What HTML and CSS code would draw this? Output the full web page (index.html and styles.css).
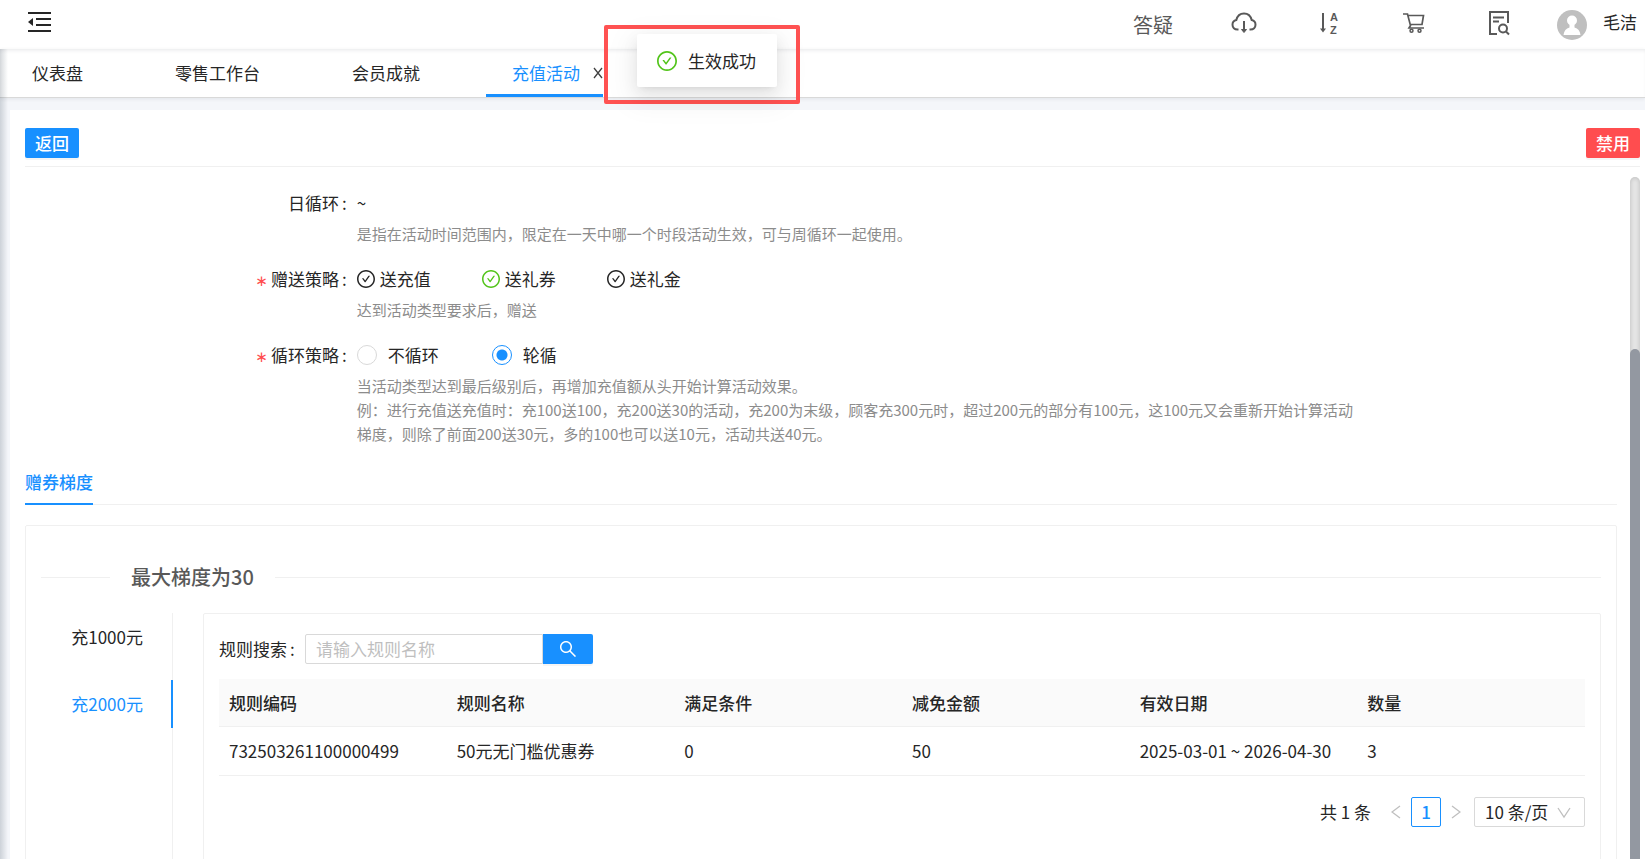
FILE: index.html
```html
<!DOCTYPE html>
<html lang="zh-CN">
<head>
  <meta charset="UTF-8" />
  <title>充值活动</title>
  <link rel="stylesheet" href="styles.css">
</head>
<body>

  <svg class="sprite" aria-hidden="true">
    <symbol id="check-circle" viewBox="64 64 896 896">
      <path d="M699 353h-46.9c-10.2 0-19.9 4.9-25.9 13.3L469 584.3l-71.2-98.8c-6-8.3-15.6-13.3-25.9-13.3H325c-6.5 0-10.3 7.4-6.5 12.7l124.6 172.8a31.8 31.8 0 0051.7 0l210.6-292c3.9-5.3.1-12.7-6.4-12.7z"/>
      <path d="M512 64C264.6 64 64 264.6 64 512s200.6 448 448 448 448-200.6 448-448S759.4 64 512 64zm0 820c-205.4 0-372-166.6-372-372s166.6-372 372-372 372 166.6 372 372-166.6 372-372 372z"/>
    </symbol>
  </svg>

  <header class="header">
    <button class="icon-btn" aria-label="收起菜单">
      <svg width="24" height="22" viewBox="0 0 24 22">
        <path d="M0 2h23M8 8h15M8 14h15M0 20h23" fill="none" stroke="#262626" stroke-width="2"/>
        <path d="M0 11l5-4v8z" fill="#262626"/>
      </svg>
    </button>
    <nav class="header-tools">
      <a href="#" class="faq">答疑</a>
      <button class="tool" aria-label="下载">
        <svg width="26" height="22" viewBox="0 0 26 22" fill="none" stroke="#595959" stroke-width="2">
          <path d="M7.5 17.500H6.500C3.500 17.500 1.500 15.500 1.500 12.800c0-2.400 1.600-4.200 3.800-4.700C6.300 4 9.300 1.500 13 1.500s6.700 2.500 7.700 6.600c2.200.5 3.800 2.300 3.800 4.700 0 2.700-2 4.700-5 4.700h-1"/>
          <path d="M13 9v10"/>
          <path d="M10.500 17.500h5L13 20.500z" fill="#595959" stroke-width="1"/>
        </svg>
      </button>
      <button class="tool" aria-label="排序">
        <svg class="sort-icon" width="22" height="28" viewBox="0 0 22 28">
          <path d="M5 4v17" fill="none" stroke="#595959" stroke-width="2"/>
          <path d="M2 19.500h6L5 23.500z"/>
          <text x="12" y="12">A</text>
          <text x="12" y="25">Z</text>
        </svg>
      </button>
      <button class="tool" aria-label="购物车">
        <svg width="22" height="22" viewBox="0 0 22 22" fill="none" stroke="#595959" stroke-width="2">
          <path d="M0 2h4.500l3 11.500L6 16h15M5 3.500h15.500L19 12.500H7.500" stroke-width="1.700"/>
          <circle cx="8.500" cy="18.700" r="1.500" stroke-width="1.500"/>
          <circle cx="16.500" cy="18.700" r="1.500" stroke-width="1.500"/>
        </svg>
      </button>
      <button class="tool" aria-label="日志查询">
        <svg width="22" height="26" viewBox="0 0 22 26" fill="none" stroke="#595959" stroke-width="2">
          <path d="M9 24H2V2h18v11M5 7.500h11M5 11.500h6"/>
          <circle cx="15" cy="18.500" r="4"/>
          <path d="M18 21.500l3 3"/>
        </svg>
      </button>
    </nav>
    <a href="#" class="user">
      <svg width="30" height="30" viewBox="0 0 30 30">
        <circle cx="15" cy="15" r="15" fill="#bfbfbf"/>
        <circle cx="15" cy="10.500" r="5" fill="#fff"/>
        <path d="M12.500 14h5v3.500c3.500.8 5.500 3.500 6 7.500h-17c.5-4 2.500-6.700 6-7.500z" fill="#fff"/>
      </svg>
      <span>毛洁</span>
    </a>
  </header>

  <nav class="page-tabs">
    <a href="#">仪表盘</a>
    <a href="#">零售工作台</a>
    <a href="#">会员成就</a>
    <a href="#" class="active">充值活动
      <svg width="10" height="12" viewBox="0 0 10 12"><path d="M1 1l8 10M9 1L1 11" fill="none" stroke="#404040" stroke-width="1.300"/></svg>
    </a>
  </nav>

  <main class="page">
    <div class="toolbar">
      <button class="btn btn-primary">返回</button>
      <button class="btn btn-danger">禁用</button>
    </div>

    <div class="scroll-area">
      <div class="content">

        <div class="form-row">
          <div class="form-label">日循环</div>
          <div class="form-value">
            <div class="form-line">~</div>
            <p class="help">是指在活动时间范围内，限定在一天中哪一个时段活动生效，可与周循环一起使用。</p>
          </div>
        </div>

        <div class="form-row">
          <div class="form-label required">赠送策略</div>
          <div class="form-value">
            <div class="form-line">
              <span class="gift"><svg><use href="#check-circle"/></svg>送充值</span>
              <span class="gift on"><svg><use href="#check-circle"/></svg>送礼券</span>
              <span class="gift"><svg><use href="#check-circle"/></svg>送礼金</span>
            </div>
            <p class="help">达到活动类型要求后，赠送</p>
          </div>
        </div>

        <div class="form-row">
          <div class="form-label required">循环策略</div>
          <div class="form-value">
            <div class="form-line">
              <label class="radio"><input type="radio" name="loop">不循环</label>
              <label class="radio"><input type="radio" name="loop" checked>轮循</label>
            </div>
            <p class="help">当活动类型达到最后级别后，再增加充值额从头开始计算活动效果。<br>例：进行充值送充值时：充100送100，充200送30的活动，充200为末级，顾客充300元时，超过200元的部分有100元，这100元又会重新开始计算活动梯度，则除了前面200送30元，多的100也可以送10元，活动共送40元。</p>
          </div>
        </div>

        <div class="section-tabs">
          <a href="#" class="active">赠券梯度</a>
        </div>

        <section class="card">
          <h2 class="divider">最大梯度为30</h2>
          <div class="levels">
            <div class="level-tabs">
              <a href="#">充1000元</a>
              <a href="#" class="active">充2000元</a>
            </div>

            <div class="panel">
              <form class="search">
                <label for="ruleName">规则搜索</label>
                <input type="text" id="ruleName" placeholder="请输入规则名称">
                <button type="button" aria-label="搜索">
                  <svg width="18" height="18" viewBox="64 64 896 896" fill="#fff"><path d="M909.6 854.5L649.9 594.8C690.2 542.7 712 479 712 412c0-80.2-31.3-155.4-87.9-212.1-56.6-56.7-132-87.9-212.1-87.9s-155.5 31.3-212.1 87.9C143.2 256.5 112 331.8 112 412c0 80.1 31.3 155.5 87.9 212.1C256.5 680.8 331.8 712 412 712c67 0 130.6-21.8 182.7-62l259.7 259.6a8.2 8.2 0 0011.6 0l43.6-43.5a8.2 8.2 0 000-11.6zM570.4 570.4C528 612.7 471.8 636 412 636s-116-23.3-158.4-65.6C211.3 528 188 471.8 188 412s23.3-116.1 65.6-158.4C296 211.3 352.2 188 412 188s116.1 23.2 158.4 65.6S636 352.2 636 412s-23.3 116.1-65.6 158.4z"/></svg>
                </button>
              </form>

              <table>
                <thead>
                  <tr>
                    <th>规则编码</th>
                    <th>规则名称</th>
                    <th>满足条件</th>
                    <th>减免金额</th>
                    <th>有效日期</th>
                    <th>数量</th>
                  </tr>
                </thead>
                <tbody>
                  <tr>
                    <td>732503261100000499</td>
                    <td>50元无门槛优惠券</td>
                    <td>0</td>
                    <td>50</td>
                    <td>2025-03-01 ~ 2026-04-30</td>
                    <td>3</td>
                  </tr>
                </tbody>
              </table>

              <div class="pagination">
                <span>共 1 条</span>
                <button class="arrow" aria-label="上一页" disabled>
                  <svg width="10" height="14" viewBox="0 0 10 14"><path d="M9 1L1 7l8 6" fill="none" stroke="#bfbfbf" stroke-width="1.300"/></svg>
                </button>
                <button class="current">1</button>
                <button class="arrow" aria-label="下一页" disabled>
                  <svg width="10" height="14" viewBox="0 0 10 14"><path d="M1 1l8 6-8 6" fill="none" stroke="#bfbfbf" stroke-width="1.300"/></svg>
                </button>
                <div class="page-size">
                  <select aria-label="每页条数">
                    <option>10 条/页</option>
                    <option>20 条/页</option>
                    <option>50 条/页</option>
                  </select>
                  <svg width="14" height="12" viewBox="0 0 14 12"><path d="M1 1l6 9 6-9" fill="none" stroke="#bfbfbf" stroke-width="1.300"/></svg>
                </div>
              </div>
            </div>
          </div>
        </section>
      </div>

      <div class="scroll-track"><div class="scroll-thumb"></div></div>
    </div>
  </main>

  <div class="notice-frame">
    <div class="notice" role="status">
      <svg><use href="#check-circle"/></svg>
      <span>生效成功</span>
    </div>
  </div>

</body>
</html>
```

FILE: styles.css
```css
* {
  box-sizing: border-box;
}

body {
  display: flex;
  flex-direction: column;
  height: 100vh;
  margin: 0;
  overflow: hidden;
  background: #f4f6fa;
  color: #262626;
  font-family: "Noto Sans CJK SC", sans-serif;
  font-size: 17px;
  line-height: 24px;
}

a {
  color: inherit;
  text-decoration: none;
}

button,
input,
select {
  font: inherit;
  color: inherit;
}

button {
  padding: 0;
  border: none;
  background: none;
  cursor: pointer;
}

svg {
  display: block;
  flex: none;
}

.sprite {
  display: none;
}

/* header */
.header {
  display: flex;
  align-items: center;
  flex: none;
  height: 49px;
  padding: 0 8px 0 28px;
  background: #fff;
}

.icon-btn {
  margin-bottom: 6px;
}

.header-tools {
  display: flex;
  align-items: center;
  margin: 0 16px 4px auto;
}

.faq {
  margin-right: 28px;
  padding-top: 4px;
  color: #595959;
  font-size: 20px;
}

.tool {
  display: flex;
  justify-content: center;
  width: 85px;
}

.sort-icon {
  fill: #595959;
  font-family: "Liberation Sans", sans-serif;
  font-size: 11px;
  font-weight: 700;
}

.user {
  display: flex;
  align-items: center;
  gap: 16px;
}

.user span {
  margin-bottom: 6px;
}

/* opened pages */
.page-tabs {
  position: relative;
  z-index: 1;
  display: flex;
  flex: none;
  gap: 66px;
  height: 49px;
  padding-left: 6px;
  border-bottom: 1px solid #d9d9d9;
  background: #fff;
  box-shadow: inset 0 3px 4px -2px rgba(0, 21, 41, 0.1), 0 1px 4px rgba(0, 21, 41, 0.08);
}

.page-tabs a {
  display: flex;
  align-items: center;
  gap: 13px;
  padding: 2px 0 0 26px;
  border-bottom: 3px solid transparent;
}

.page-tabs .active {
  border-color: #1890ff;
  color: #1890ff;
}

/* page */
.page {
  display: flex;
  flex-direction: column;
  flex: 1;
  min-height: 0;
  margin: 12px 0 0 10px;
  padding: 18px 5px 0 15px;
  background: #fff;
}

/* shade cast by the side menu */
.page::before {
  content: "";
  position: absolute;
  z-index: 2;
  top: 49px;
  bottom: 0;
  left: 0;
  width: 8px;
  background: linear-gradient(to right, rgba(0, 21, 41, 0.16), rgba(0, 21, 41, 0));
}

.toolbar {
  display: flex;
  justify-content: space-between;
  flex: none;
  padding-bottom: 8px;
  border-bottom: 1px solid #f0f0f0;
}

.btn {
  height: 30px;
  padding: 0 10px;
  border-radius: 2px;
  color: #fff;
  font-weight: 500;
  box-shadow: 0 2px 0 rgba(0, 0, 0, 0.04);
}

.btn-primary {
  background: #1890ff;
}

.btn-danger {
  background: #ff4d4f;
}

.scroll-area {
  display: flex;
  flex: 1;
  gap: 13px;
  min-height: 0;
  padding-top: 10px;
  overflow: hidden;
}

.content {
  flex: 1;
  padding-top: 11px;
}

.scroll-track {
  width: 10px;
  border-radius: 5px 5px 0 0;
  background: #e6e6e6;
  box-shadow: inset 0 0 5px rgba(0, 0, 0, 0.2);
}

.scroll-thumb {
  height: 75%;
  margin-top: 172px;
  border-radius: 5px 5px 0 0;
  background: #9398a1;
}

/* activity form */
.form-row {
  display: grid;
  grid-template-columns: 5fr 15fr 4fr;
  margin-bottom: 18px;
}

.form-label {
  padding-right: 8px;
  text-align: right;
  line-height: 30px;
}

.form-label::after,
.search label::after {
  content: ":";
  margin: 0 2px 0 3px;
}

.required::before {
  content: "∗";
  margin-right: 3px;
  color: #ff4d4f;
  font-family: "DejaVu Sans", sans-serif;
  font-size: 15px;
}

.form-line {
  display: flex;
  align-items: center;
  height: 30px;
}

/* long hints may run slightly past the column */
.help {
  margin: 4px -8px 0 0;
  color: #8c8c8c;
  font-size: 15px;
}

.gift {
  display: flex;
  align-items: center;
  gap: 5px;
  width: 125px;
}

.gift svg {
  width: 18px;
  height: 18px;
  fill: currentColor;
}

.gift.on svg {
  fill: #52c41a;
}

.radio {
  display: flex;
  align-items: center;
  gap: 11px;
  width: 135px;
}

.radio input {
  width: 20px;
  height: 20px;
  margin: 0;
  border: 1px solid #d9d9d9;
  border-radius: 50%;
  background: #fff;
  appearance: none;
}

.radio input:checked {
  border-color: #1890ff;
  background: radial-gradient(circle, #1890ff 5px, #fff 6px);
}

/* gradient section */
.section-tabs {
  display: flex;
  height: 41px;
  border-bottom: 1px solid #f0f0f0;
}

.section-tabs a {
  height: 41px;
  padding-top: 6px;
  border-bottom: 2px solid #1890ff;
  color: #1890ff;
  font-weight: 500;
}

.card {
  min-height: 560px;
  margin-top: 20px;
  padding: 36px 15px 15px;
  border: 1px solid #f0f0f0;
  border-radius: 2px;
}

.divider {
  display: flex;
  align-items: center;
  gap: 21px;
  margin: 0 0 21px;
  color: #595959;
  font-size: 20px;
  font-weight: 500;
  line-height: 30px;
}

.divider::before,
.divider::after {
  content: "";
  height: 1px;
  background: #f0f0f0;
}

.divider::before {
  width: 69px;
}

.divider::after {
  flex: 1;
}

.levels {
  display: flex;
  gap: 30px;
  min-height: 440px;
}

.level-tabs {
  display: flex;
  flex-direction: column;
  gap: 19px;
  width: 132px;
  border-right: 1px solid #f0f0f0;
}

.level-tabs a {
  margin-right: -1px;
  padding: 12px 28px;
  border-right: 2px solid transparent;
  text-align: right;
}

.level-tabs .active {
  border-color: #1890ff;
  color: #1890ff;
}

.panel {
  flex: 1;
  padding: 20px 15px;
  border: 1px solid #f0f0f0;
  border-radius: 2px;
}

.search {
  display: flex;
  align-items: center;
  margin-bottom: 15px;
}

.search label {
  width: 86px;
}

.search input {
  width: 238px;
  height: 30px;
  padding: 0 10px 2px;
  border: 1px solid #d9d9d9;
  border-radius: 2px 0 0 2px;
}

.search input::placeholder {
  color: #bfbfbf;
}

.search button {
  display: flex;
  align-items: center;
  justify-content: center;
  width: 50px;
  height: 30px;
  border-radius: 0 2px 2px 0;
  background: #1890ff;
  box-shadow: 0 2px 0 rgba(0, 0, 0, 0.04);
}

table {
  width: 100%;
  table-layout: fixed;
  border-collapse: separate;
  border-spacing: 0;
}

th,
td {
  height: 48px;
  padding: 0 10px;
  border-bottom: 1px solid #f0f0f0;
  text-align: left;
  white-space: nowrap;
}

th {
  background: #fafafa;
  font-weight: 500;
}

td {
  height: 49px;
}

.pagination {
  display: flex;
  align-items: center;
  justify-content: flex-end;
  margin-top: 21px;
}

.arrow {
  display: flex;
  justify-content: center;
  width: 30px;
}

.pagination span {
  margin-right: 10px;
}

.current {
  width: 30px;
  height: 30px;
  border: 1px solid #1890ff;
  border-radius: 2px;
  color: #1890ff;
  font-weight: 500;
}

.page-size {
  position: relative;
  margin-left: 3px;
}

.page-size select {
  display: block;
  width: 111px;
  height: 30px;
  padding: 0 10px;
  border: 1px solid #d9d9d9;
  border-radius: 2px;
  background: #fff;
  appearance: none;
}

.page-size svg {
  position: absolute;
  top: 10px;
  right: 14px;
  pointer-events: none;
}

/* success message */
.notice-frame {
  position: absolute;
  z-index: 3;
  top: 25px;
  left: 604px;
  padding: 5px 19px 13px 29px;
  border: 4px solid #ff5252;
  border-radius: 2px;
}

.notice {
  display: flex;
  align-items: center;
  gap: 11px;
  height: 53px;
  padding: 0 21px 0 20px;
  border-radius: 2px;
  background: #fff;
  box-shadow: 0 3px 6px -4px rgba(0, 0, 0, 0.12), 0 6px 16px rgba(0, 0, 0, 0.08), 0 9px 28px 8px rgba(0, 0, 0, 0.05);
}

.notice svg {
  width: 20px;
  height: 20px;
  fill: #52c41a;
}
```
